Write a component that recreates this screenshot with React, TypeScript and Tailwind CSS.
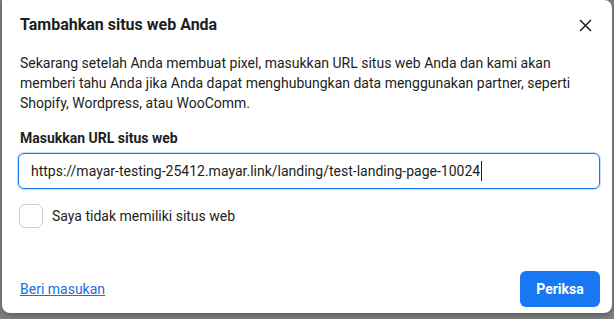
export default function App() {
  return (
    <div className="h-[319px] w-[614px] overflow-hidden bg-[#7f7f7f] font-['Roboto',sans-serif]">
      <div className="ml-[2px] flex h-[313px] w-[610px] flex-col rounded-tr-lg rounded-b-lg bg-white shadow-[0_2px_6px_rgba(0,0,0,0.3)]">
        <div className="flex items-center justify-between pl-[18px] pr-[15px] pt-[13px]">
          <h2 className="text-[16px] font-bold leading-[22px] text-[#1c1e21]">Tambahkan situs web Anda</h2>
          <button className="flex h-6 w-6 items-center justify-center text-[#1c1e21]">
            <svg width="13" height="13" viewBox="0 0 13 13" fill="none" stroke="currentColor" strokeWidth="1.5">
              <path d="M1 1L12 12M12 1L1 12" />
            </svg>
          </button>
        </div>
        <p className="mt-[16px] pl-[18px] pr-[24px] text-[14px] leading-[20px] text-[#1c1e21]">
          Sekarang setelah Anda membuat pixel, masukkan URL situs web Anda dan kami akan memberi tahu Anda jika Anda dapat menghubungkan data menggunakan partner, seperti Shopify, Wordpress, atau WooComm.
        </p>
        <label className="mt-[15px] pl-[18px] text-[14px] font-bold leading-[20px] text-[#1c1e21]">Masukkan URL situs web</label>
        <div className="ml-[16px] mt-[5px] flex h-[36px] w-[582px] items-center rounded-md border border-[#1877f2] px-[12px] shadow-[0_0_0_1px_#c7dcf8]">
          <span className="text-[14px] text-[#1c1e21]">https://mayar-testing-25412.mayar.link/landing/test-landing-page-10024</span>
          <span className="ml-[1px] h-[20px] w-px bg-[#1c1e21]" />
        </div>
        <div className="ml-[17px] mt-[15px] flex items-center gap-[9px]">
          <div className="h-6 w-6 rounded-md border border-[#ccd0d5] bg-white" />
          <span className="text-[14px] text-[#1c1e21]">Saya tidak memiliki situs web</span>
        </div>
        <div className="mt-auto flex items-center justify-between pb-[6px] pl-[18px] pr-[12px]">
          <a href="#" className="text-[14px] text-[#216fdb] underline">Beri masukan</a>
          <button className="h-[36px] w-[80px] rounded-md bg-[#1877f2] text-[14px] font-bold text-white">Periksa</button>
        </div>
      </div>
    </div>
  );
}
